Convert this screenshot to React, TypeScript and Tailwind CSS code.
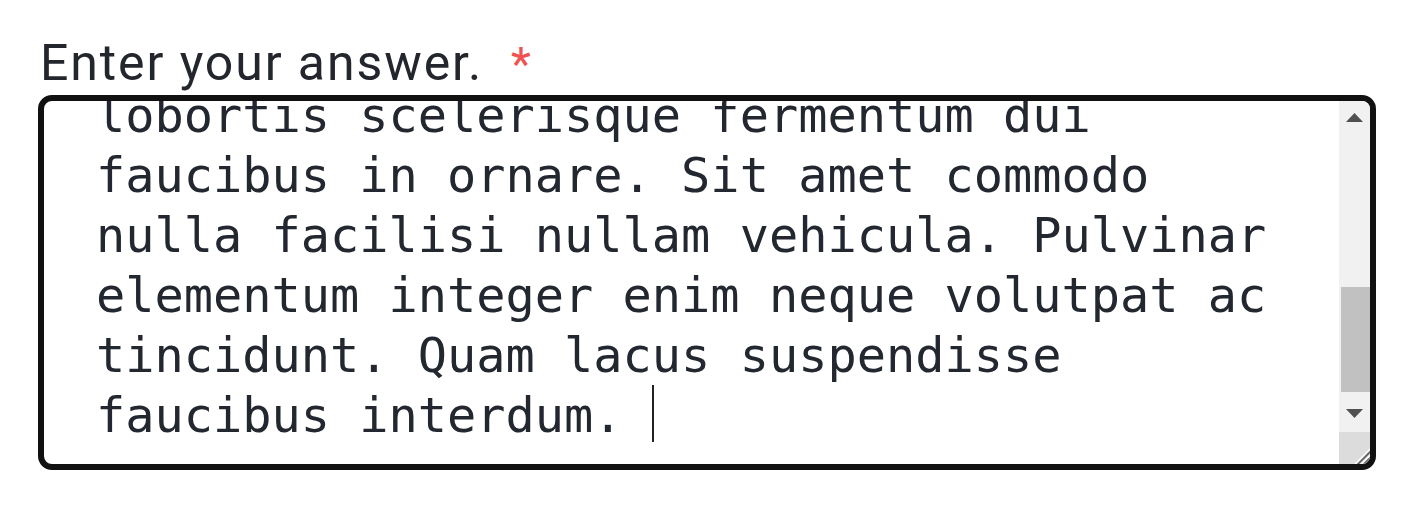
import React from "react";

const lines = [
  "Lorem ipsum dolor sit amet, consectetur",
  "adipiscing elit, sed do eiusmod tempor",
  "lobortis scelerisque fermentum dui",
  "faucibus in ornare. Sit amet commodo",
  "nulla facilisi nullam vehicula. Pulvinar",
  "elementum integer enim neque volutpat ac",
  "tincidunt. Quam lacus suspendisse",
];

export default function App() {
  return (
    <div className="w-[1424px] h-[512px] bg-white pl-[38px] pt-[36px] overflow-hidden">
      <div
        className="h-[54px] pl-[2px] text-[50px] leading-[54px] tracking-[1.9px] text-[#23262d] whitespace-pre"
        style={{ fontFamily: "Roboto, 'Liberation Sans', sans-serif" }}
      >
        Enter your answer.<span className="ml-[28px] text-[46px] leading-[0px] text-[#f05252]">*</span>
      </div>
      <div className="mt-[5px] w-[1338px] h-[375px] border-[6px] border-[#111111] rounded-[14px] overflow-hidden flex bg-white">
        <div
          className="flex-1 flex flex-col justify-end overflow-hidden pl-[52px] pb-[19px] text-[48.6px] leading-[60px] text-[#23272f] whitespace-pre"
          style={{ fontFamily: "'DejaVu Sans Mono', 'Liberation Mono', monospace" }}
        >
          {lines.map((l, i) => (
            <div key={i} className="shrink-0">
              {l}
            </div>
          ))}
          <div className="shrink-0">
            faucibus interdum.{" "}
            <span className="inline-block w-[2px] h-[57px] bg-[#222222] align-[-10px]" />
          </div>
        </div>
        <div className="w-[31px] flex flex-col">
          <div className="h-[32px] bg-[#f1f1f1] flex justify-center pt-[12px]">
            <svg width="17" height="9" viewBox="0 0 17 9">
              <polygon points="8.5,0 17,9 0,9" fill="#505050" />
            </svg>
          </div>
          <div className="h-[268px] bg-[#f1f1f1] pl-[2px] pt-[154px]">
            <div className="h-[105px] bg-[#c1c1c1]" />
          </div>
          <div className="h-[31px] bg-[#f1f1f1] flex justify-center pt-[8px]">
            <svg width="17" height="9" viewBox="0 0 17 9">
              <polygon points="0,0 17,0 8.5,9" fill="#505050" />
            </svg>
          </div>
          <div className="h-[32px] bg-[#dcdcdc]">
            <svg width="31" height="32" viewBox="0 0 31 32">
              <line x1="16" y1="33" x2="33" y2="16" stroke="#ffffff" strokeWidth="2.5" />
              <line x1="18" y1="33" x2="33" y2="18" stroke="#6a6a6a" strokeWidth="2" />
              <line x1="22" y1="33" x2="33" y2="22" stroke="#ffffff" strokeWidth="2.5" />
              <line x1="24" y1="33" x2="33" y2="24" stroke="#6a6a6a" strokeWidth="2" />
            </svg>
          </div>
        </div>
      </div>
    </div>
  );
}
